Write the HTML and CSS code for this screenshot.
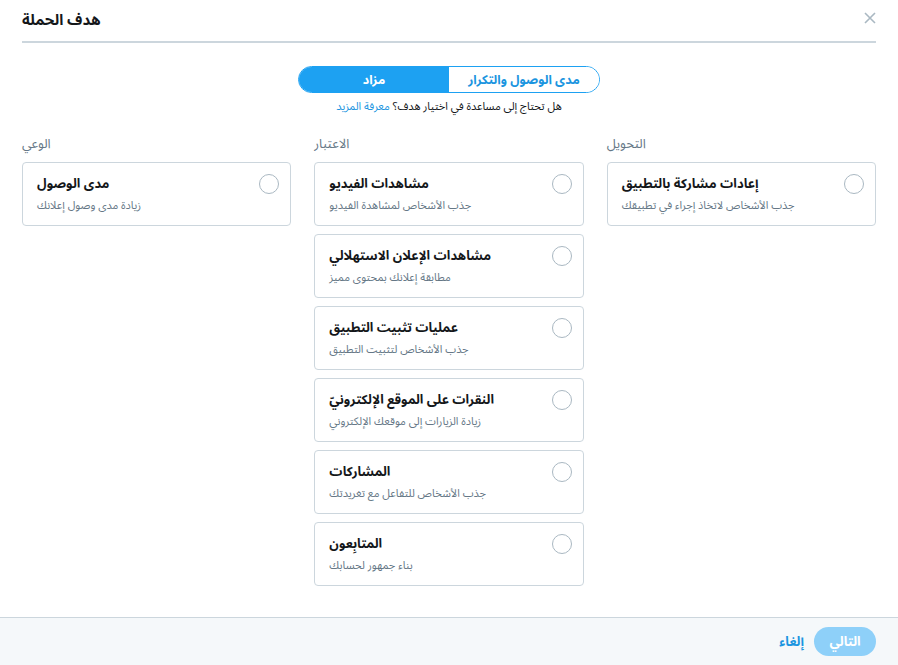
FILE: index.html
```html
<!DOCTYPE html>
<html lang="ar">
<head>
<meta charset="utf-8">
<title>هدف الحملة</title>
<link rel="stylesheet" href="styles.css">
</head>
<body>
<div class="modal">
  <div class="main">
    <div class="header">
      <h1 class="title">هدف الحملة</h1>
      <span class="close">
        <svg width="12" height="12" viewBox="0 0 12 12"><path d="M1 1 L11 11 M11 1 L1 11" stroke="#aab8c2" stroke-width="1.6" fill="none"/></svg>
      </span>
    </div>
    <div class="toggle-wrap">
      <div class="toggle">
        <span class="seg seg-on">مزاد</span>
        <span class="seg seg-off">مدى الوصول والتكرار</span>
      </div>
      <p class="help">هل تحتاج إلى مساعدة في اختيار هدف؟ <a class="link" href="#">معرفة المزيد</a></p>
    </div>
    <div class="columns">
      <div class="col">
        <div class="col-head">الوعي</div>
        <div class="card">
          <div class="card-text"><div class="card-title">مدى الوصول</div><div class="card-desc">زيادة مدى وصول إعلانك</div></div>
          <span class="radio"></span>
        </div>
      </div>
      <div class="col">
        <div class="col-head">الاعتبار</div>
        <div class="card">
          <div class="card-text"><div class="card-title">مشاهدات الفيديو</div><div class="card-desc">جذب الأشخاص لمشاهدة الفيديو</div></div>
          <span class="radio"></span>
        </div>
        <div class="card">
          <div class="card-text"><div class="card-title">مشاهدات الإعلان الاستهلالي</div><div class="card-desc">مطابقة إعلانك بمحتوى مميز</div></div>
          <span class="radio"></span>
        </div>
        <div class="card">
          <div class="card-text"><div class="card-title">عمليات تثبيت التطبيق</div><div class="card-desc">جذب الأشخاص لتثبيت التطبيق</div></div>
          <span class="radio"></span>
        </div>
        <div class="card">
          <div class="card-text"><div class="card-title">النقرات على الموقع الإلكترونيّ</div><div class="card-desc">زيادة الزيارات إلى موقعك الإلكتروني</div></div>
          <span class="radio"></span>
        </div>
        <div class="card">
          <div class="card-text"><div class="card-title">المشاركات</div><div class="card-desc">جذب الأشخاص للتفاعل مع تغريدتك</div></div>
          <span class="radio"></span>
        </div>
        <div class="card">
          <div class="card-text"><div class="card-title">المتابِعون</div><div class="card-desc">بناء جمهور لحسابك</div></div>
          <span class="radio"></span>
        </div>
      </div>
      <div class="col">
        <div class="col-head">التحويل</div>
        <div class="card">
          <div class="card-text"><div class="card-title">إعادات مشاركة بالتطبيق</div><div class="card-desc">جذب الأشخاص لاتخاذ إجراء في تطبيقك</div></div>
          <span class="radio"></span>
        </div>
      </div>
    </div>
  </div>
  <div class="footer">
    <a class="cancel" href="#">إلغاء</a>
    <button class="next" type="button">التالي</button>
  </div>
</div>
</body>
</html>
```
FILE: styles.css
```css
* { box-sizing: border-box; }
html, body { margin: 0; padding: 0; }
body {
  width: 898px;
  height: 665px;
  background: #fff;
  font-family: "Noto Sans Arabic", "Noto Sans", "DejaVu Sans", sans-serif;
  color: #14171a;
  overflow: hidden;
}
.modal {
  display: flex;
  flex-direction: column;
  height: 665px;
}
.main { flex: 1; }
.header {
  margin: 0 22px;
  padding-top: 8px;
  height: 43px;
  border-bottom: 2px solid #ccd6dd;
  display: flex;
  justify-content: space-between;
  align-items: flex-start;
}
.title {
  margin: 0;
  font-size: 15px;
  font-weight: 700;
  line-height: 24px;
}
.close {
  display: block;
  margin-top: 4px;
  width: 12px;
  height: 12px;
}
.close svg { display: block; }
.toggle-wrap {
  display: flex;
  flex-direction: column;
  align-items: center;
  margin-top: 23px;
}
.toggle {
  display: flex;
  width: 302px;
  height: 27px;
  border: 1px solid #1da1f2;
  border-radius: 14px;
  overflow: hidden;
}
.seg {
  flex: 1;
  display: flex;
  align-items: center;
  justify-content: center;
  font-size: 12.5px;
  font-weight: 700;
}
.seg-on { background: #1da1f2; color: #fff; }
.seg-off { background: #fff; color: #1b95e0; }
.help {
  margin: 6px 0 0;
  font-size: 11px;
  line-height: 16px;
  color: #14171a;
}
.link { color: #1b95e0; text-decoration: none; }
.columns {
  display: flex;
  gap: 23px;
  margin: 20px 22px 0;
}
.col {
  width: 270px;
  display: flex;
  flex-direction: column;
  gap: 8px;
}
.col-head {
  font-size: 13px;
  line-height: 18px;
  color: #657786;
  margin-bottom: 1px;
}
.card {
  height: 64px;
  border: 1px solid #ccd6dd;
  border-radius: 4px;
  display: flex;
  align-items: flex-start;
  padding: 10px 11px 0 14px;
}
.card-text { flex: 1; }
.card-title {
  font-size: 13px;
  font-weight: 700;
  line-height: 22px;
  color: #14171a;
}
.card-desc {
  margin-top: 2px;
  font-size: 11px;
  line-height: 18px;
  color: #657786;
}
.radio {
  width: 20px;
  height: 20px;
  margin-top: 1px;
  border: 1px solid #aab8c2;
  border-radius: 50%;
  flex: none;
}
.footer {
  height: 48px;
  background: #f5f8fa;
  border-top: 1px solid #ccd6dd;
  display: flex;
  justify-content: flex-end;
  align-items: center;
  padding: 0 22px;
  gap: 10px;
}
.cancel {
  color: #1b95e0;
  font-size: 13px;
  font-weight: 700;
  text-decoration: none;
}
.next {
  width: 62px;
  height: 29px;
  border: none;
  border-radius: 15px;
  background: #8ed0f9;
  color: #fff;
  font-family: inherit;
  font-size: 13px;
  font-weight: 700;
  padding: 0;
}
```
